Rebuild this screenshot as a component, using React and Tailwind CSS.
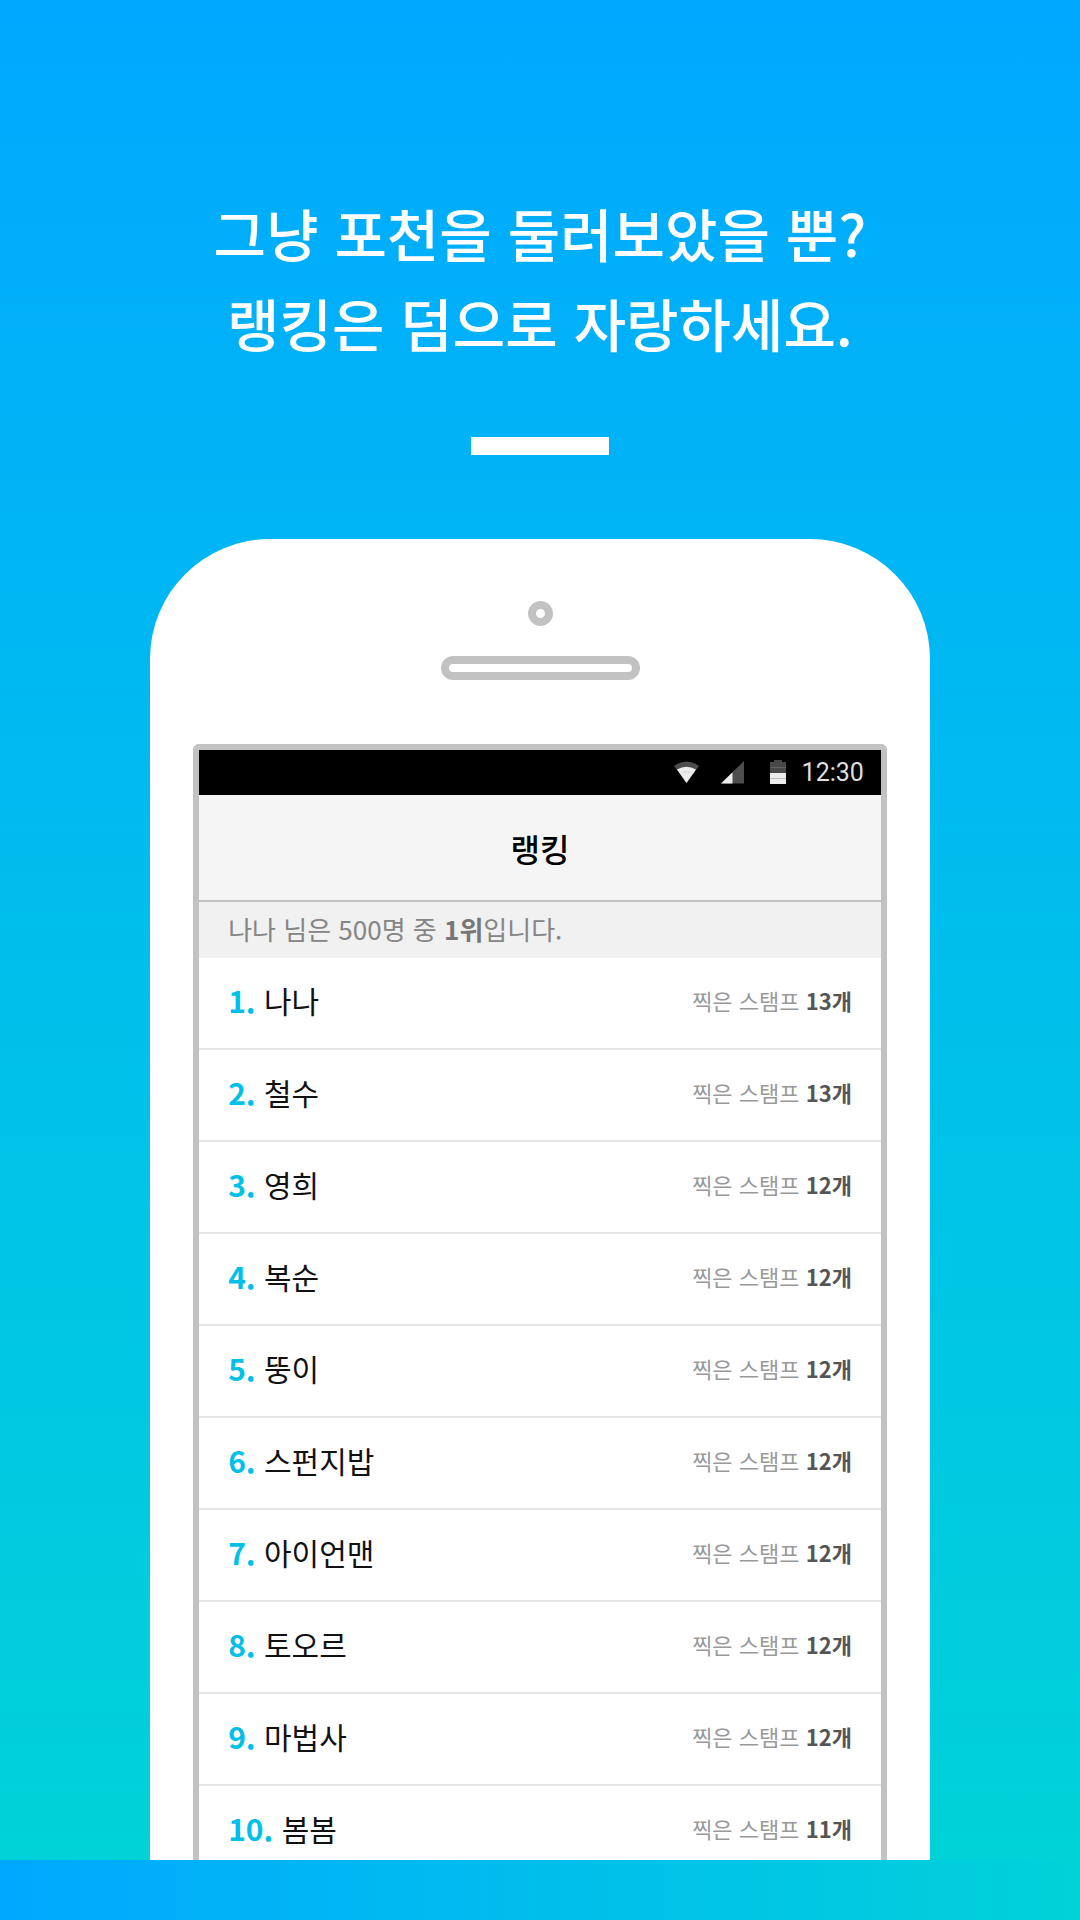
const rows = [
  ['나나', 13], ['철수', 13], ['영희', 12], ['복순', 12], ['뚱이', 12],
  ['스펀지밥', 12], ['아이언맨', 12], ['토오르', 12], ['마법사', 12], ['봄봄', 11],
];

function StatusBar() {
  return (
    <div className="flex h-[45px] items-center justify-end bg-black pr-[17px] font-[Roboto,sans-serif] text-[25px] leading-none text-[#dedede]">
      <svg width="25" height="24" viewBox="0 0 25 24" className="mr-[22px]" aria-hidden="true">
        <path d="M0 5Q12.5 -4 25 5L12.5 22Z" fill="#4d4d4d" />
        <path d="M3 8.500Q12.5 3 22 8.500L12.500 22Z" fill="#ececec" />
        <path d="M9 11.500Q12.500 9.500 16 11.500" stroke="#cfcfcf" fill="none" />
      </svg>
      <svg width="23" height="24" viewBox="0 0 23 24" className="mr-[26px]" aria-hidden="true">
        <path d="M23 0V22.500H0Z" fill="#4d4d4d" />
        <path d="M11.500 11.200V22.500H0Z" fill="#ececec" />
      </svg>
      <svg width="16" height="26" viewBox="0 0 16 26" className="mr-4" aria-hidden="true">
        <path d="M4 0H12V2H16V13H0V2H4Z" fill="#484848" />
        <path d="M0 7.500H16" stroke="#626262" />
        <path d="M0 13H16V24H0Z" fill="#ececec" />
        <path d="M0 18.500H16" stroke="#bdbdbd" />
      </svg>
      <time>12:30</time>
    </div>
  );
}

export default function App() {
  return (
    <main lang="ko" className="flex min-h-screen flex-col bg-[#00d2d8] font-['Noto_Sans_CJK_KR',sans-serif]">
      <section className="flex flex-1 flex-col items-center bg-linear-to-b from-[#00a8ff] to-[#00d2d8] pt-[187px]">
        <h1 className="text-center text-[57px] font-medium leading-[90px] text-white">
          그냥 포천을 둘러보았을 뿐?<br />랭킹은 덤으로 자랑하세요.
        </h1>
        <div className="mt-[70px] h-[18px] w-[138px] bg-white" />
        <div className="mt-[84px] flex w-[72.2%] flex-1 flex-col items-center rounded-t-[120px] bg-white px-[43px] pt-[62px]">
          <div className="size-[25px] rounded-full border-8 border-[#c2c2c2]" />
          <div className="mt-[30px] h-6 w-[199px] rounded-full border-8 border-[#c2c2c2]" />
          <div className="mt-16 w-full flex-1 rounded-t-md border-x-6 border-t-6 border-[#c2c2c2]">
            <StatusBar />
            <header className="flex h-[107px] items-center justify-center border-b-2 border-[#c2c2c2] bg-[#f5f5f5]">
              <h2 className="text-[32px] font-medium leading-none text-black">랭킹</h2>
            </header>
            <p className="flex h-14 items-center whitespace-pre bg-[#f1f1f1] px-[29px] pb-[2px] text-[26px] leading-none text-[#858585]">나나 님은 500명 중 <b className="font-bold text-[#777]">1위</b>입니다.</p>
            <ol>
              {rows.map(([name, count], i) => (
                <li key={name} className="flex h-[92px] items-start justify-between border-b-2 border-[#e6e6e6] px-[29px] pt-3 last:h-[73px] last:border-0">
                  <span className="text-[30px] leading-[60px] text-[#111]"><b className="font-bold text-[#00c0e8]">{i + 1}.</b> {name}</span>
                  <span className="text-[22px] leading-[60px] text-[#999]">찍은 스탬프 <b className="font-bold text-[#555]">{count}개</b></span>
                </li>
              ))}
            </ol>
          </div>
        </div>
      </section>
      <footer className="h-[60px] bg-linear-to-r from-[#00a8ff] to-[#00d2d8]" />
    </main>
  );
}
